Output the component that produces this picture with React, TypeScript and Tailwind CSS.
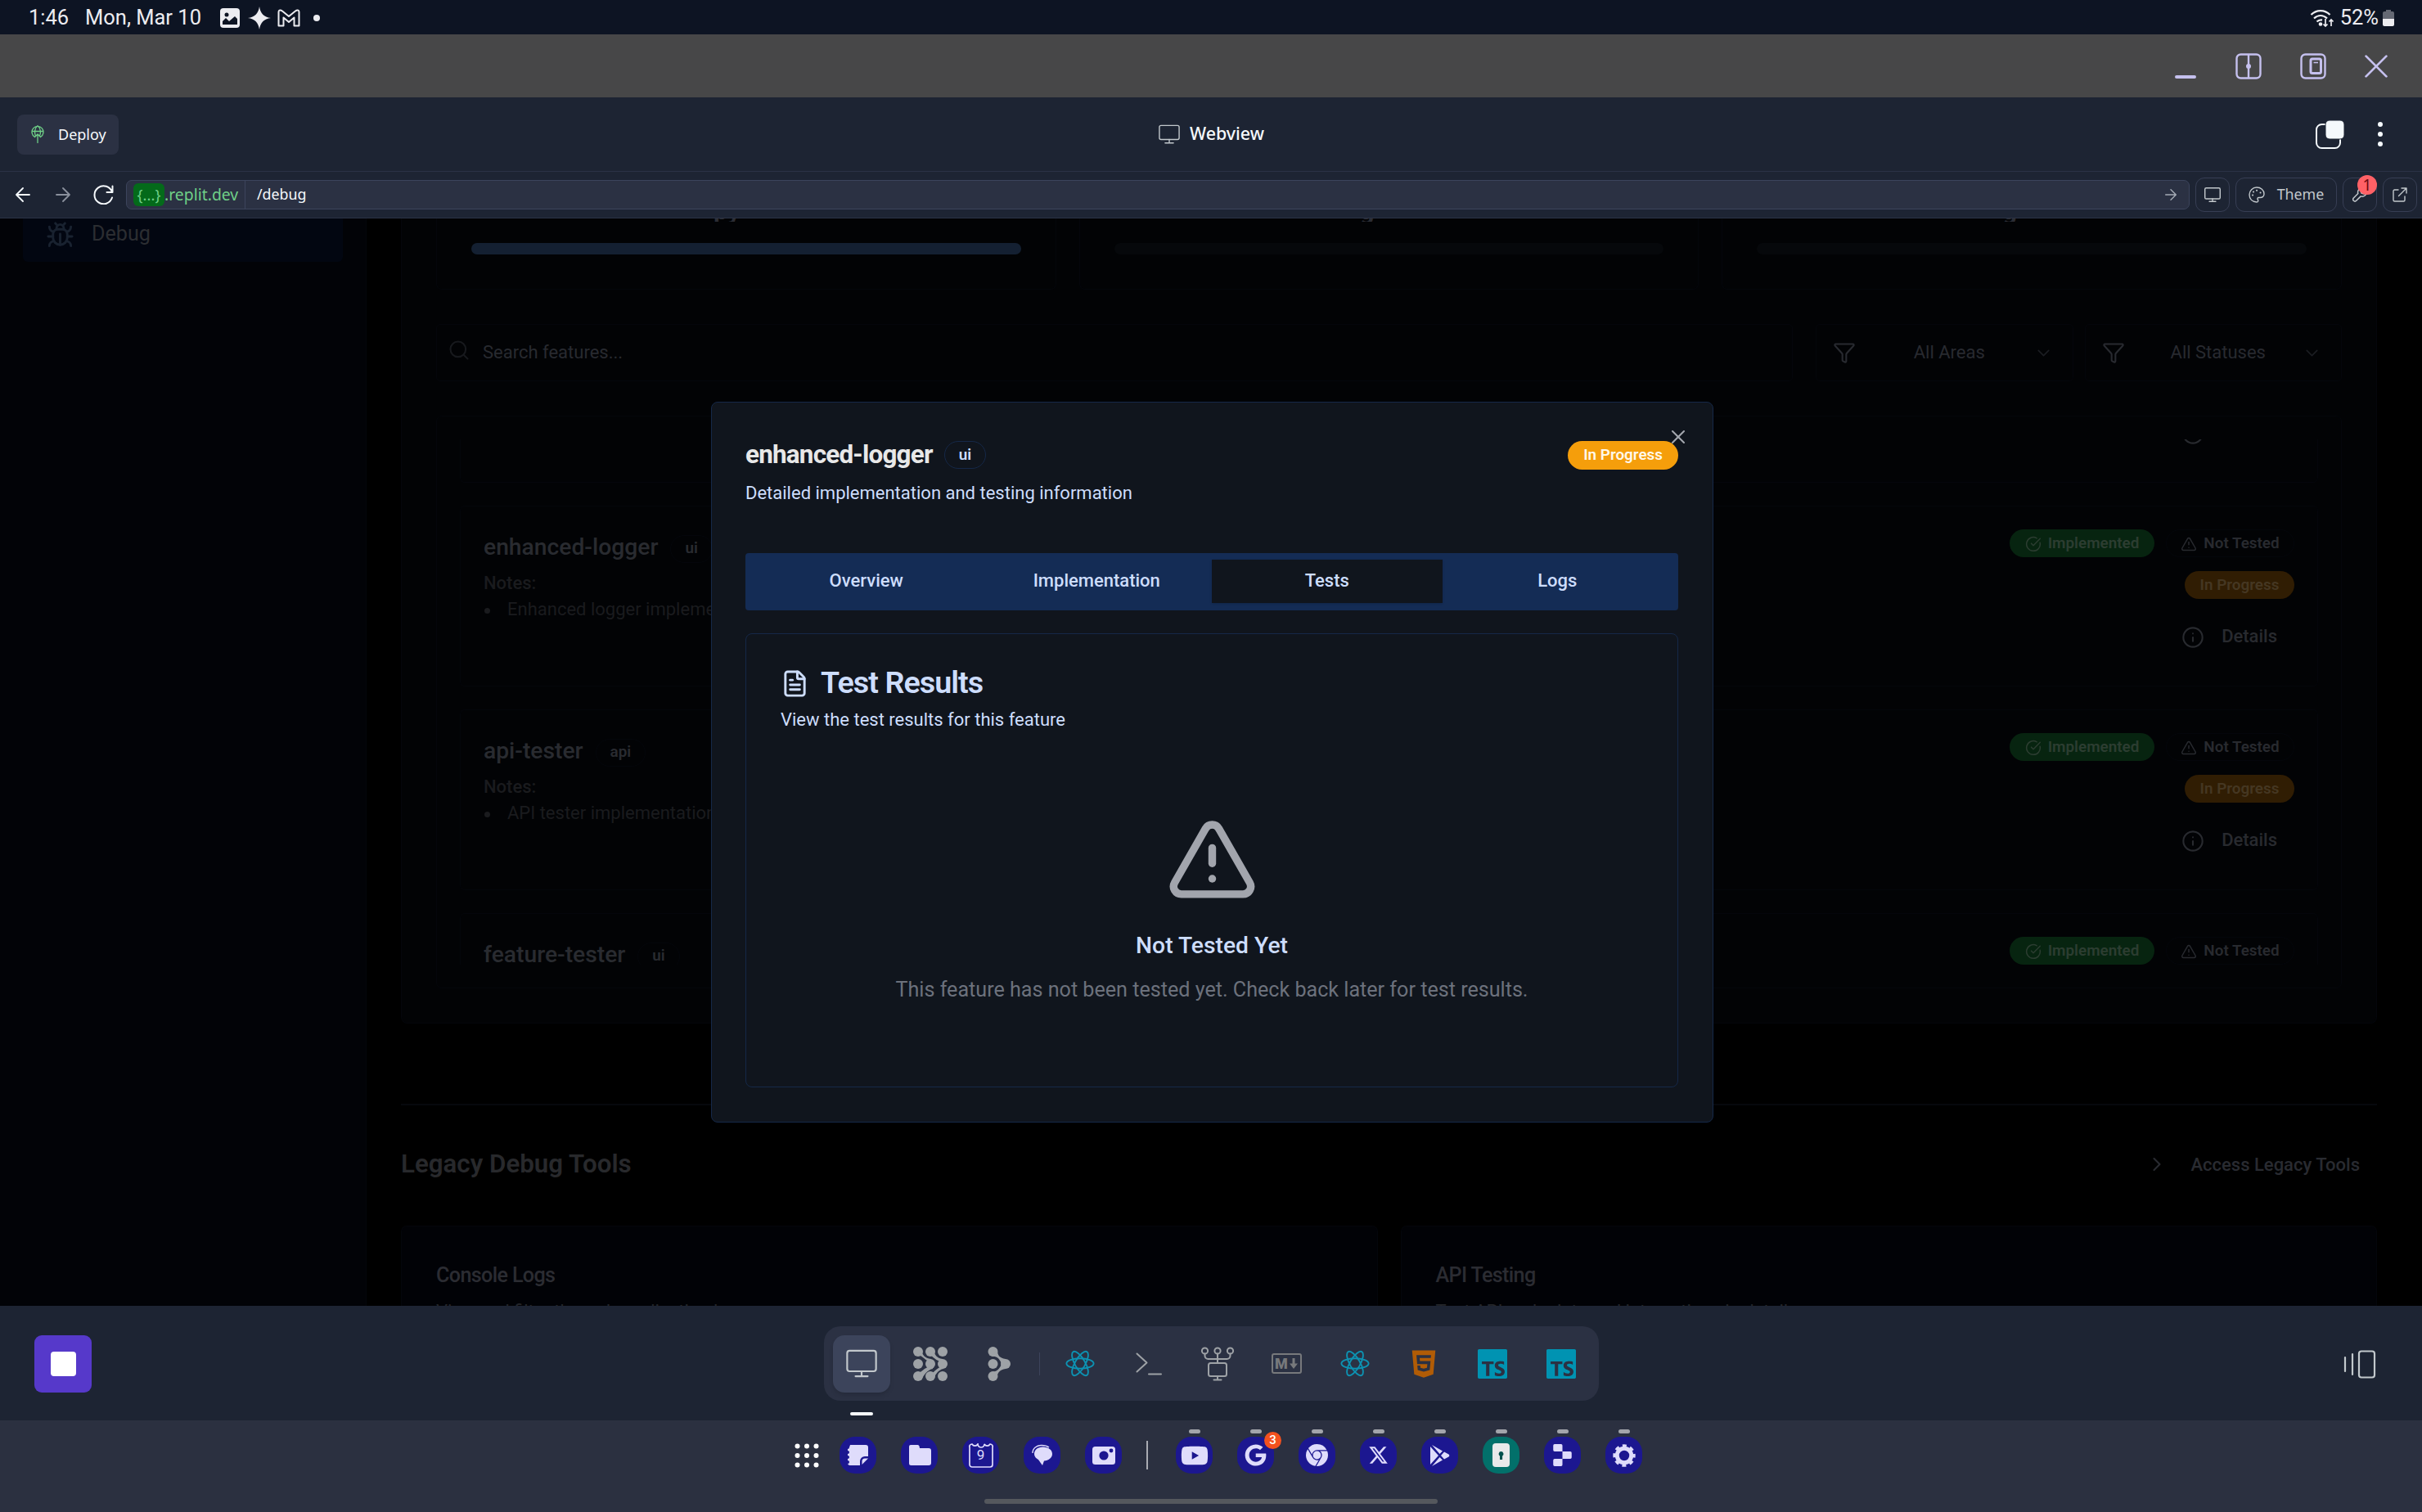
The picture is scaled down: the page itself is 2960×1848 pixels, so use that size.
import type { ReactNode } from "react";
import {
  AlertTriangle,
  Bug,
  CheckCircle,
  ChevronDown,
  ChevronRight,
  FileText,
  Filter,
  Info,
  Search,
  X,
} from "lucide-react";
import { FaGoogle, FaHtml5, FaXTwitter, FaYoutube } from "react-icons/fa6";
import { SiGooglechrome, SiReplit, SiTypescript } from "react-icons/si";

/* ---------- icons ---------- */

function MonitorIcon({ className, sw = 1.5 }: { className: string; sw?: number }) {
  return (
    <svg viewBox="0 0 28 25" fill="none" stroke="currentColor" strokeWidth={sw} strokeLinecap="round" className={className}>
      <rect x="1" y="1" width="26" height="18.5" rx="2.2" />
      <path d="M14 19.5V24M8.5 24h11" />
    </svg>
  );
}

function ReactIcon({ className }: { className: string }) {
  return (
    <svg viewBox="0 0 36 33" fill="none" stroke="currentColor" strokeWidth="1.9" className={className}>
      <ellipse cx="18" cy="16.5" rx="16.6" ry="6.2" />
      <ellipse cx="18" cy="16.5" rx="16.6" ry="6.2" transform="rotate(60 18 16.5)" />
      <ellipse cx="18" cy="16.5" rx="16.6" ry="6.2" transform="rotate(120 18 16.5)" />
    </svg>
  );
}

function DotsIcon() {
  return (
    <svg viewBox="0 0 42 42" fill="currentColor" className="h-[42px] w-[42px]">
      <path d="M9 2C11 10 14 14 22 15l2 12C18 28 13 34 10 41L3 33c6 0 9-6 15-8l1-7C13 15 10 10 4 9Z" />
      <path d="M24 2c2 8 5 12 12 13l1 12c-6 1-10 7-13 14l-6-7c6 0 8-6 15-9v-7c-7-2-10-8-15-9Z" />
      <circle cx="6" cy="21" r="7.500" fill="#2b3143" />
      <circle cx="36" cy="36" r="7.500" fill="#2b3143" />
      <circle cx="36" cy="6" r="7.500" fill="#2b3143" />
      {[6, 21, 36].map((x) => [6, 21, 36].map((y) => <circle key={`${x}-${y}`} cx={x} cy={y} r="6" />))}
    </svg>
  );
}

function TreeIcon() {
  return (
    <svg viewBox="0 0 28 42" fill="currentColor" className="h-[42px] w-[28px]">
      <circle cx="6.500" cy="6" r="6" />
      <circle cx="6.500" cy="36" r="6" />
      <circle cx="22" cy="21" r="6" />
      <path d="M11.500 3C12 11 15 14 22 15v12c-7 1-10 4-11 12L4 31c7 0 11-4 13-10-2-6-6-10-12-9Z" />
      <circle cx="6.500" cy="21" r="7.500" fill="#2b3143" />
      <circle cx="6.500" cy="21" r="6" />
    </svg>
  );
}

function MarkdownIcon() {
  return (
    <div className="flex h-[25px] w-[37px] items-center justify-center gap-[2px] rounded-[3px] border-2 border-[#77797c] text-[18px] font-black leading-none text-[#77797c]">
      <span>M</span>
      <svg viewBox="0 0 10 13" fill="currentColor" className="h-[13px] w-[10px]">
        <path d="M3.500 0h3v6.500H10L5 13 0 6.500h3.500Z" />
      </svg>
    </div>
  );
}

function GitDeployIcon() {
  return (
    <svg viewBox="0 0 42 42" fill="none" stroke="currentColor" strokeWidth="2" strokeLinecap="round" className="h-[42px] w-[42px]">
      <circle cx="5.500" cy="5" r="3.600" />
      <circle cx="21" cy="5" r="3.600" />
      <circle cx="36.500" cy="5" r="3.600" />
      <path d="M5.500 8.600V11a4 4 0 0 0 4 4h23a4 4 0 0 0 4-4V8.600M21 8.600V20" />
      <rect x="10" y="20" width="22" height="16" rx="2.500" />
      <path d="M21 36v4.500M16.500 40.500h9" />
    </svg>
  );
}

/* ---------- system bars ---------- */

function StatusBar() {
  return (
    <div className="flex h-[42px] items-center justify-between bg-[#0d1423] pl-[35px] pr-[34px] text-[25.500px] leading-none text-[#ececf0]">
      <div className="flex items-center pt-px">
        <span className="w-[69px]">1:46</span>
        <span className="w-[165px]">Mon, Mar 10</span>
        <svg viewBox="0 0 24 24" className="h-[24px] w-[24px]">
          <rect width="24" height="24" rx="4" fill="#ececf0" />
          <circle cx="8" cy="8" r="2.500" fill="#0d1423" />
          <path d="M3 20v-4l4-4 4 4 7-6 3 3v7Z" fill="#0d1423" />
        </svg>
        <svg viewBox="0 0 28 28" fill="#ececf0" className="ml-[10px] h-[28px] w-[28px]">
          <path d="M14 0c1.200 8.500 5.500 12.800 14 14-8.500 1.200-12.800 5.500-14 14C12.800 19.500 8.500 15.200 0 14 8.500 12.800 12.800 8.500 14 0Z" />
        </svg>
        <svg viewBox="0 0 28 22" fill="none" stroke="#ececf0" strokeWidth="2" strokeLinejoin="round" className="ml-[8px] h-[22px] w-[28px]">
          <path d="M1.500 20.500V3.500C1.500 1 4 .800 6 2.500L14 9l8-6.500C24 .800 26.500 1 26.500 3.500v17h-6V10.500L14 16l-6.500-5.500v10Z" />
        </svg>
        <span className="ml-[16px] h-2 w-2 rounded-full bg-[#ececf0]" />
      </div>
      <div className="flex items-center pt-px">
        <svg viewBox="0 0 30 22" fill="none" stroke="#ececf0" strokeWidth="2.300" className="mr-[7px] h-[22px] w-[30px]">
          <path d="M1.500 7C8 .500 18 .500 24.500 7M5 11.500c5-4.500 11-4.500 16 0M8.500 15.500c2-2 4-2.500 6.500-2" />
          <circle cx="13" cy="18.500" r="1.200" />
          <path d="M19 12v9M16.500 18.500l2.500 2.500 2.500-2.500M26 21v-8M23.500 15.500l2.500-2.500 2.500 2.500" strokeWidth="1.700" />
        </svg>
        <span>52%</span>
        <svg viewBox="0 0 14 20" className="ml-[5px] h-[20px] w-[14px]">
          <path d="M4 0h6v2h2a2 2 0 0 1 2 2v7H0V4a2 2 0 0 1 2-2h2Z" fill="#656974" />
          <path d="M0 11h14v7a2 2 0 0 1-2 2H2a2 2 0 0 1-2-2Z" fill="#ececf0" />
        </svg>
      </div>
    </div>
  );
}

function TitleBar() {
  return (
    <div className="flex h-[77px] items-center justify-end gap-[47px] bg-[#474748] pr-[42px] text-[#c5c0ee]">
      <svg viewBox="0 0 28 32" className="h-8 w-[28px]">
        <rect x="1" y="27" width="26" height="4" rx="2" fill="currentColor" />
      </svg>
      <svg viewBox="0 0 32 32" fill="none" stroke="currentColor" strokeWidth="2.400" className="h-8 w-8">
        <rect x="1.500" y="1.500" width="29" height="29" rx="5" />
        <path d="M16 1.500v29" />
        <circle cx="16" cy="16" r="3" fill="currentColor" stroke="none" />
      </svg>
      <svg viewBox="0 0 32 32" fill="none" stroke="currentColor" strokeWidth="2.400" className="h-8 w-8">
        <rect x="1.500" y="1.500" width="29" height="29" rx="5" />
        <rect x="13" y="7" width="12.500" height="17.500" rx="2" strokeWidth="3" />
        <path d="M16.500 11.500h5.500" strokeWidth="1.500" />
      </svg>
      <svg viewBox="0 0 26 26" fill="none" stroke="currentColor" strokeWidth="2.600" strokeLinecap="round" className="h-[28px] w-[28px]">
        <path d="M1.500 1.500l23 23M24.500 1.500l-23 23" />
      </svg>
    </div>
  );
}

function AppHeader() {
  return (
    <div className="grid h-[91px] grid-cols-3 items-center border-b border-[#2b3245] bg-[#1d2433] font-['Noto_Sans',sans-serif] text-[#f5f9fc]">
      <div className="ml-[21px] flex h-[49px] w-[124px] items-center rounded-[8px] bg-[#2b3143] pl-[17px] text-[18px]">
        <svg viewBox="0 0 16 22" fill="none" stroke="#6fcf87" strokeWidth="1.300" strokeLinecap="round" className="mr-[17px] h-[22px] w-4">
          <path d="M4.500 14.500A7 7 0 1 1 11.500 14.500M1 7.500h14M8 .800c-4 3-4 9-2.500 12M8 .800c4 3 4 9 2.500 12M8 21.500V11M4.500 14.500 8 11l3.500 3.500" />
        </svg>
        Deploy
      </div>
      <div className="mb-[2px] flex items-center justify-center gap-[12px] pl-px text-[21.400px] font-medium">
        <MonitorIcon className="mt-[2px] h-6 w-[26px] text-[#c2c8cc]" />
        Webview
      </div>
      <div className="flex items-center justify-end gap-[41px] pr-[48px]">
        <svg viewBox="0 0 35 35" className="h-[35px] w-[35px]">
          <rect x="1" y="5" width="29" height="29" rx="6.500" fill="none" stroke="#f5f9fc" strokeWidth="2" />
          <rect x="12" y="0" width="23" height="23" rx="5" fill="#f5f9fc" stroke="#1d2433" strokeWidth="1" />
        </svg>
        <svg viewBox="0 0 6 30" fill="#f5f9fc" className="h-[30px] w-[6px]">
          <circle cx="3" cy="3" r="3" />
          <circle cx="3" cy="15" r="3" />
          <circle cx="3" cy="27" r="3" />
        </svg>
      </div>
    </div>
  );
}

function ToolButton({ children, className }: { children: ReactNode; className: string }) {
  return (
    <div className={`relative flex h-[42px] items-center justify-center rounded-[11px] border border-[#373e54] text-[#c2c8cc] ${className}`}>
      {children}
    </div>
  );
}

function UrlBar() {
  return (
    <div className="flex h-[57px] items-center border-b border-[#2b3245] bg-[#1d2433] pl-[19px] pr-[6px] font-['Noto_Sans',sans-serif]">
      <svg viewBox="0 0 18 18" fill="none" stroke="#f5f9fc" strokeWidth="1.800" strokeLinecap="round" strokeLinejoin="round" className="h-[18px] w-[18px]">
        <path d="M17 9H1M9 1 1 9l8 8" />
      </svg>
      <svg viewBox="0 0 18 18" fill="none" stroke="#8a909c" strokeWidth="1.800" strokeLinecap="round" strokeLinejoin="round" className="ml-[31px] h-[18px] w-[18px]">
        <path d="M1 9h16M9 1l8 8-8 8" />
      </svg>
      <svg viewBox="0 0 26 24" fill="none" stroke="#f5f9fc" strokeWidth="2" strokeLinecap="round" strokeLinejoin="round" className="ml-[27px] h-[24px] w-[26px]">
        <path d="M24.500 1.500v7.500h-7M24 9A11 11 0 1 0 24 15.500" />
      </svg>
      <div className="ml-[15px] flex h-[36px] flex-1 items-center rounded-[7px] border border-[#3c445c] bg-[#2b3143] pl-[8px] text-[19.400px] text-[#6fcf87]">
        <span className="flex h-[28px] w-[38px] items-center justify-center rounded-[6px] bg-[#046a1a] text-[18.500px]">{"{...}"}</span>
        <span className="w-[98px] pb-px">.replit.dev</span>
        <span className="h-full border-l border-[#3c445c] pl-[14px] text-[17.800px] leading-[33px] text-[#f5f9fc]">/debug</span>
        <svg viewBox="0 0 14 14" fill="none" stroke="#a5abb5" strokeWidth="1.400" strokeLinecap="round" strokeLinejoin="round" className="ml-auto mr-[15px] h-[14px] w-[14px]">
          <path d="M.700 7h12.600M7 .700 13.300 7 7 13.300" />
        </svg>
      </div>
      <ToolButton className="ml-[7px] w-[42px]">
        <MonitorIcon className="h-[18px] w-5" sw={2} />
      </ToolButton>
      <ToolButton className="ml-[7px] w-[124px] gap-[15px] text-[17.800px]">
        <svg viewBox="0 0 20 20" fill="none" stroke="currentColor" strokeWidth="1.400" className="h-5 w-5">
          <path d="M10 19C4.500 18.500 1 15 1 10a9 9 0 0 1 9-9c5 0 9 3.500 9 8 0 3-2 4.500-5 4.500h-1.500c-1.500 0-2 1.300-1.200 2.500.900 1.400.500 3-1.300 3Z" />
          <path d="M5 10.500h.1M6 6.500h.1M10 4.800h.1M14.500 7.500h.1" strokeWidth="2" strokeLinecap="round" />
        </svg>
        <span className="pb-[2px]">Theme</span>
      </ToolButton>
      <ToolButton className="ml-[7px] w-[42px]">
        <svg viewBox="0 0 18 18" fill="none" stroke="currentColor" strokeWidth="1.500" strokeLinejoin="round" className="h-[18px] w-[18px]">
          <path d="M16.800 5.200 14 8l-3-1-1-3 2.800-2.800a5 5 0 0 0-6 6.300L1.400 13a2.300 2.300 0 0 0 3.300 3.300l5.500-5.400a5 5 0 0 0 6.600-5.700Z" />
        </svg>
        <span className="absolute -top-[4px] right-[-1px] flex h-6 w-6 items-center justify-center rounded-full bg-[#ff6166] text-[19px] leading-none text-[#6b0a10]">
          1
        </span>
      </ToolButton>
      <ToolButton className="ml-[7px] w-[42px]">
        <svg viewBox="0 0 18 18" fill="none" stroke="currentColor" strokeWidth="1.400" strokeLinecap="round" strokeLinejoin="round" className="h-[18px] w-[18px]">
          <path d="M7 3H2.500A1.500 1.500 0 0 0 1 4.500v11A1.500 1.500 0 0 0 2.500 17h11a1.500 1.500 0 0 0 1.500-1.500V11M11 1h6v6M17 1 7.500 10.500" />
        </svg>
      </ToolButton>
    </div>
  );
}

/* ---------- dimmed page ---------- */

function ProgressCard({ bar, clipped, pad }: { bar: string; clipped: string; pad: string }) {
  return (
    <div className="h-[87px] flex-1 rounded-b-[7px] border-x border-b border-[#04060b] px-[42px]">
      <div className={`flex h-[4px] items-end overflow-hidden text-[31px] font-bold leading-none text-[#2b2d34] ${pad}`}>
        <span className="-mb-[1px] leading-[28px]">{clipped}</span>
      </div>
      <div className={`mt-[26px] h-[14px] rounded-full ${bar}`} />
    </div>
  );
}

function FilterBox({ label }: { label: string }) {
  return (
    <div className="flex h-[70px] w-[314.500px] items-center justify-between rounded-[5px] border border-[#04060b] pl-[20px] pr-[23px] text-[22px] text-[#282a30]">
      <Filter className="h-[28px] w-[28px]" strokeWidth={1.8} />
      <span className="-mr-[12px] mb-[2px] w-[150px] text-center">{label}</span>
      <ChevronDown className="h-[25px] w-[25px] text-[#1b1d22]" strokeWidth={1.6} />
    </div>
  );
}

function DimBadge({ children, className }: { children: ReactNode; className: string }) {
  return (
    <span className={`flex h-[34px] items-center justify-center rounded-full text-[18.860px] font-semibold leading-none ${className}`}>
      {children}
    </span>
  );
}

function FeatureItem({ name, area, note }: { name: string; area: string; note: string }) {
  return (
    <div className="flex h-[221px] shrink-0 justify-between rounded-[6px] border border-[#04060b] p-[28px]">
      <div>
        <div className="flex h-[44px] items-center pt-px text-[28.280px] font-medium text-[#292b30]">
          {name}
          <span className="ml-[15px] mt-[2px] flex h-[34px] items-center rounded-full border border-[#04060b] px-[17px] text-[18.860px] font-semibold">
            {area}
          </span>
        </div>
        <div className="mt-[6px] text-[22px] leading-[32px] text-[#1a1b1e]">
          <p className="font-medium">Notes:</p>
          <p className="flex items-center">
            <span className="ml-[1px] mr-[21px] mt-[2px] h-[7px] w-[7px] rounded-full bg-[#1a1b1e]" />
            {note}
          </p>
        </div>
      </div>
      <div className="flex flex-col items-end">
        <div className="flex gap-[14px]">
          <DimBadge className="w-[177px] bg-[#072410] pt-px text-[#2c3d31]">
            <CheckCircle className="mr-[8px] h-[20px] w-[20px]" strokeWidth={1.8} />
            Implemented
          </DimBadge>
          <DimBadge className="w-[157px] border border-[#04060b] pt-px text-[#282a2f]">
            <AlertTriangle className="mr-[8px] h-[20px] w-[20px]" strokeWidth={1.8} />
            Not Tested
          </DimBadge>
        </div>
        <DimBadge className="mt-[17px] w-[134px] bg-[#301d03] text-[#453722]">In Progress</DimBadge>
        <div className="mt-[15px] flex h-[60px] items-center pr-[21px] text-[22px] font-medium text-[#282a2f]">
          <Info className="mr-[21px] mt-[3px] h-[28px] w-[28px]" strokeWidth={1.8} />
          Details
        </div>
      </div>
    </div>
  );
}

function LegacyCard({ title, text }: { title: string; text: string }) {
  return (
    <div className="h-[98px] flex-1 overflow-hidden rounded-t-[7px] border-x border-t border-[#04060b] bg-[#010206] px-[42px] pt-[42px]">
      <h3 className="h-[33px] text-[25.140px] font-medium leading-[36px] tracking-tight text-[#2b2c32]">{title}</h3>
      <p className="mt-[13px] whitespace-nowrap text-[22px] leading-[32px] text-[#24262a]">{text}</p>
    </div>
  );
}

function Page() {
  return (
    <div className="flex h-full">
      <aside className="w-[448px] shrink-0 border-r border-[#04060b] bg-[#020307] px-[28px]">
        <div className="flex h-[53px] items-start rounded-b-[6px] bg-[#020611] pl-[28px] text-[25.140px] leading-[38px] text-[#2b2d31]">
          <Bug className="mr-[21px] mt-[3px] h-[35px] w-[35px] text-[#192230]" strokeWidth={2} />
          Debug
        </div>
      </aside>
      <main className="w-[2457px] pl-[42px]">
        <section className="rounded-b-[8px] border-x border-b border-[#04060b] bg-[#020305] px-[42px] pb-[42px]">
          <div className="flex gap-[28px]">
            <ProgressCard bar="bg-[#142032]" clipped="py" pad="pl-[296px]" />
            <ProgressCard bar="bg-[#06080b]" clipped="g" pad="pl-[300px]" />
            <ProgressCard bar="bg-[#06080b]" clipped="g" pad="pl-[300px]" />
          </div>
          <div className="mt-[42px] flex">
            <div className="mr-[28px] flex h-[70px] flex-1 items-center rounded-[5px] border border-[#04060b] pl-[13px] text-[22px] text-[#282a30]">
              <Search className="-mt-[6px] mr-[15px] h-[28px] w-[28px] text-[#17191d]" strokeWidth={1.8} />
              <span className="mb-[2px]">Search features...</span>
            </div>
            <FilterBox label="All Areas" />
            <div className="w-[14px]" />
            <FilterBox label="All Statuses" />
          </div>
          <div className="mt-[42px] h-[700px] rounded-[7px] border border-[#04060b] p-[28px]">
            <div className="flex h-[642px] flex-col gap-[28px] overflow-hidden">
              <div className="-mt-[168px] shrink-0">
                <FeatureItem name="debug-panel" area="ui" note="Debug panel implementation" />
              </div>
              <FeatureItem name="enhanced-logger" area="ui" note="Enhanced logger implementation" />
              <FeatureItem name="api-tester" area="api" note="API tester implementation" />
              <FeatureItem name="feature-tester" area="ui" note="Feature tester implementation" />
            </div>
          </div>
        </section>
        <div className="mt-[98px] h-[2px] bg-[#06080d]" />
        <div className="mt-[40px] flex h-[64px] items-center justify-between pr-[21px]">
          <h2 className="pt-px text-[31.300px] font-semibold text-[#28292c]">Legacy Debug Tools</h2>
          <div className="flex items-center text-[22px] font-medium text-[#292b31]">
            <ChevronRight className="mr-[28px] h-[28px] w-[28px]" strokeWidth={1.8} />
            Access Legacy Tools
          </div>
        </div>
        <div className="mt-[43px] flex gap-[28px]">
          <LegacyCard title="Console Logs" text="View and filter through application logs" />
          <LegacyCard title="API Testing" text="Test API endpoints and integrations in detail" />
        </div>
      </main>
    </div>
  );
}

/* ---------- dialog ---------- */

function Dialog() {
  const tabs = ["Overview", "Implementation", "Tests", "Logs"];
  return (
    <div className="absolute left-[869px] top-[224px] flex h-[881px] w-[1225px] flex-col rounded-[8px] border border-[#152848] bg-[#10151d] pl-[41px] pr-[42px] pt-[42px] text-[#cdddfc]">
      <X className="absolute right-[28px] top-[28px] h-[28px] w-[28px] text-[#a3a7ae]" strokeWidth={1.8} />
      <div className="relative flex h-[44px] items-center">
        <h1 className="text-[31.430px] font-bold leading-none tracking-tight text-[#e8e8e8]">enhanced-logger</h1>
        <span className="ml-[14px] flex h-[34px] items-center rounded-full border border-[#152848] px-[17px] text-[18.860px] font-semibold leading-none">
          ui
        </span>
        <span className="ml-auto flex h-[35px] items-center rounded-full bg-[#f59e0b] px-[19px] text-[18.860px] font-semibold leading-none text-[#fff8ea]">
          In Progress
        </span>
      </div>
      <p className="mt-[8px] text-[22px] leading-[34px]">Detailed implementation and testing information</p>
      <div className="mt-[56px] grid h-[70px] grid-cols-4 rounded-[4px] bg-[#142c55] px-[7px] py-[8px] text-[22px] font-medium">
        {tabs.map((t) => (
          <div
            key={t}
            className={`mb-px flex items-center justify-center pt-[1px] leading-none ${t === "Tests" ? "bg-[#10151d] shadow-sm" : ""}`}
          >
            <span className="-mt-[2px]">{t}</span>
          </div>
        ))}
      </div>
      <div className="mt-[28px] flex h-[555px] flex-col rounded-[8px] border border-[#152848] px-[42px] pt-[41px]">
        <div className="flex h-[38px] items-center">
          <FileText className="mr-[14px] h-[35px] w-[35px]" strokeWidth={2} />
          <h2 className="text-[37.700px] font-semibold leading-none tracking-tight">Test Results</h2>
        </div>
        <p className="mt-[9px] text-[22px] leading-[34px]">View the test results for this feature</p>
        <div className="mt-[97px] flex flex-col items-center">
          <AlertTriangle className="h-[113px] w-[113px] text-[#a2a5ad]" strokeWidth={2} />
          <h3 className="mt-[28px] text-[28.280px] font-medium leading-[42px]">Not Tested Yet</h3>
          <p className="mt-[13px] text-[25.140px] leading-[40px] text-[#6c717c]">
            This feature has not been tested yet. Check back later for test results.
          </p>
        </div>
      </div>
    </div>
  );
}

/* ---------- docks ---------- */

function DockTile({ children }: { children: ReactNode }) {
  return <div className="flex h-[70px] w-[70px] items-center justify-center text-[#9ea2a6]">{children}</div>;
}

function WorkspaceDock() {
  return (
    <div className="grid h-[140px] grid-cols-[1007px_947px_1fr] bg-[#1d2433]">
      <div className="ml-[42px] mt-[36px] flex h-[70px] w-[70px] items-center justify-center rounded-[9px] bg-[#5639ca]">
        <span className="h-[30px] w-[31px] rounded-[4px] bg-white" />
      </div>
      <div>
        <div className="mt-[25px] flex h-[91px] items-center gap-[14px] rounded-[20px] bg-[#2b3143] pl-[11px]">
          <div className="flex h-[70px] w-[70px] items-center justify-center rounded-[14px] bg-[#3c445b] text-[#c2c8cc] shadow-md">
            <MonitorIcon className="h-[35px] w-[38px]" sw={1.6} />
          </div>
          <DockTile>
            <DotsIcon />
          </DockTile>
          <DockTile>
            <TreeIcon />
          </DockTile>
          <div className="h-[28px] w-px bg-[#3c445b]" />
          <DockTile>
            <ReactIcon className="h-[33px] w-[36px] text-[#0d92b2]" />
          </DockTile>
          <DockTile>
            <svg viewBox="0 0 32 28" fill="none" stroke="currentColor" strokeWidth="2" strokeLinecap="round" strokeLinejoin="round" className="h-[28px] w-[32px]">
              <path d="M1.500 1.500 13.500 12.500 1.500 23.500M16 26.500h15" />
            </svg>
          </DockTile>
          <DockTile>
            <GitDeployIcon />
          </DockTile>
          <DockTile>
            <MarkdownIcon />
          </DockTile>
          <DockTile>
            <ReactIcon className="h-[33px] w-[36px] text-[#0d92b2]" />
          </DockTile>
          <DockTile>
            <FaHtml5 className="h-[38px] w-[38px] text-[#b15c06]" />
          </DockTile>
          <DockTile>
            <SiTypescript className="h-[36px] w-[36px] text-[#0093b2]" />
          </DockTile>
          <DockTile>
            <SiTypescript className="h-[36px] w-[36px] text-[#0093b2]" />
          </DockTile>
        </div>
        <div className="ml-[32px] mt-[14px] h-[4px] w-[28px] rounded-full bg-[#f5f9fc]" />
      </div>
      <svg viewBox="0 0 42 36" fill="none" stroke="#c2c8cc" strokeWidth="2.200" strokeLinecap="round" className="ml-auto mr-[56px] mt-[54px] h-[36px] w-[42px]">
        <rect x="21" y="1.500" width="19" height="32" rx="3" />
        <path d="M13 5v25M4 9v17" />
      </svg>
    </div>
  );
}

const glyph = "h-[27px] w-[27px]";

function TaskIcon({ children, running, badge, tone = "bg-[#1c1790]" }: { children: ReactNode; running?: boolean; badge?: string; tone?: string }) {
  return (
    <div className="flex w-[45px] flex-col items-center">
      <span className={`h-[5px] w-[14px] rounded-full ${running ? "bg-[#a3a5ab]" : ""}`} />
      <div className={`relative mt-[4px] flex h-[45px] w-[45px] items-center justify-center rounded-[19px] text-[#dfdcfb] ${tone}`}>
        {children}
        {badge && (
          <span className="absolute -right-[9px] -top-[6px] flex h-[21px] w-[21px] items-center justify-center rounded-full bg-[#f4511e] text-[15px] font-medium leading-none text-white">
            {badge}
          </span>
        )}
      </div>
    </div>
  );
}

function TaskBar() {
  return (
    <div className="flex h-[112px] flex-col bg-[#2b3040]">
      <div className="flex h-[65px] items-start justify-start gap-[30px] pl-[971px] pt-[11px]">
        <svg viewBox="0 0 30 30" fill="#ffffff" className="-mr-[5px] mt-[17px] h-[30px] w-[30px]">
          {[3.500, 15, 26.500].map((x) => [3.500, 15, 26.500].map((y) => <circle key={`${x}-${y}`} cx={x} cy={y} r="3" />))}
        </svg>
        <TaskIcon>
          <svg viewBox="0 0 27 27" className={glyph} fill="currentColor">
            <path d="M4 1h19a3 3 0 0 1 3 3v11h-4a6 6 0 0 0-6 6v5H4a3 3 0 0 1-3-2 2 2 0 0 0 2-2 2 2 0 0 0-2-2v-2a2 2 0 0 0 2-2 2 2 0 0 0-2-2v-2a2 2 0 0 0 2-2 2 2 0 0 0-2-2V6a2 2 0 0 0 2-2Z" />
            <path d="M26 17.500 18.500 25v-4a3.500 3.500 0 0 1 3.500-3.500Z" />
          </svg>
        </TaskIcon>
        <TaskIcon>
          <svg viewBox="0 0 28 27" className="h-[27px] w-[28px]" fill="currentColor">
            <path d="M1 3a2 2 0 0 1 2-2h8.500a2 2 0 0 1 2 1.500L14 5h11a3 3 0 0 1 3 3v15a3 3 0 0 1-3 3H3.500A2.500 2.500 0 0 1 1 23.500Z" />
          </svg>
        </TaskIcon>
        <TaskIcon>
          <div className="relative flex h-[30px] w-[30px] items-center justify-center">
            <svg viewBox="0 0 30 30" className="absolute inset-0" fill="none" stroke="currentColor" strokeWidth="1.700">
              <path d="M1 5a3 3 0 0 1 3-4 4 4 0 0 0 7 0 4 4 0 0 0 8 0 4 4 0 0 0 7 0 3 3 0 0 1 3 4v21a3 3 0 0 1-3 3H4a3 3 0 0 1-3-3Z" />
            </svg>
            <span className="text-[17px] leading-none">9</span>
          </div>
        </TaskIcon>
        <TaskIcon>
          <svg viewBox="0 0 27 27" className={glyph} fill="currentColor">
            <path d="M14.500 3.500C21 3.500 26 7 26 12c0 4.500-4 8-10 8.500L14 26l-5-7c-3-1.500-5-4-5-7 0-5 4.500-8.500 10.500-8.500Z" />
            <path d="M2 11C2 5 7 1.500 13 1.500c4 0 7 1 9 2.500" fill="none" stroke="currentColor" strokeWidth="1.400" />
          </svg>
        </TaskIcon>
        <TaskIcon>
          <svg viewBox="0 0 28 22" className="h-[22px] w-[28px]">
            <rect width="28" height="22" rx="3.500" fill="currentColor" />
            <circle cx="14" cy="11" r="5.600" fill="#1c1790" />
            <circle cx="23" cy="5" r="2.400" fill="#1c1790" />
          </svg>
        </TaskIcon>
        <div className="mt-[14px] h-[35px] w-[2px] bg-[#a9abb2]" />
        <div className="ml-[4px] flex gap-[30px]">
          <TaskIcon running>
            <FaYoutube className="h-[34px] w-[34px]" />
          </TaskIcon>
          <TaskIcon running badge="3">
            <FaGoogle className="h-[27px] w-[27px]" />
          </TaskIcon>
          <TaskIcon running>
            <SiGooglechrome className={glyph} />
          </TaskIcon>
          <TaskIcon running>
            <FaXTwitter className="h-[25px] w-[25px]" />
          </TaskIcon>
          <TaskIcon running>
            <svg viewBox="0 0 24 26" className="h-[26px] w-[24px]" fill="currentColor">
              <path d="M0 2v22l10-11ZM2 0l9.500 11L15 7.500ZM2 26l9.500-11 3.500 3.500ZM13 13l4-4.500 5.500 3a1.800 1.800 0 0 1 0 3l-5.500 3Z" />
            </svg>
          </TaskIcon>
          <TaskIcon running tone="bg-[#02706a]">
            <svg viewBox="0 0 21 29" className="h-[29px] w-[21px]">
              <rect width="21" height="29" rx="4" fill="#e9e9ea" />
              <path d="M10.500 10a3 3 0 0 1 1.600 5.500V20H9v-4.500A3 3 0 0 1 10.500 10Z" fill="#02504c" />
            </svg>
          </TaskIcon>
          <TaskIcon running>
            <SiReplit className={glyph} />
          </TaskIcon>
          <TaskIcon running>
            <svg viewBox="0 0 28 28" className="h-[28px] w-[28px]" fill="none" stroke="currentColor">
              <circle cx="14" cy="14" r="8.700" strokeWidth="5" />
              <circle cx="14" cy="14" r="12.200" strokeWidth="3" strokeDasharray="5.080 4.500" strokeDashoffset="2.540" />
            </svg>
          </TaskIcon>
        </div>
      </div>
      <div className="mx-auto mt-[31px] h-[6px] w-[554px] rounded-full bg-[#55585d]" />
    </div>
  );
}

export default function App() {
  return (
    <div className="h-[1848px] w-[2960px] overflow-hidden bg-black font-[Roboto,sans-serif]">
      <StatusBar />
      <TitleBar />
      <AppHeader />
      <UrlBar />
      <div className="relative h-[1329px] overflow-hidden bg-black">
        <Page />
        <Dialog />
      </div>
      <WorkspaceDock />
      <TaskBar />
    </div>
  );
}
